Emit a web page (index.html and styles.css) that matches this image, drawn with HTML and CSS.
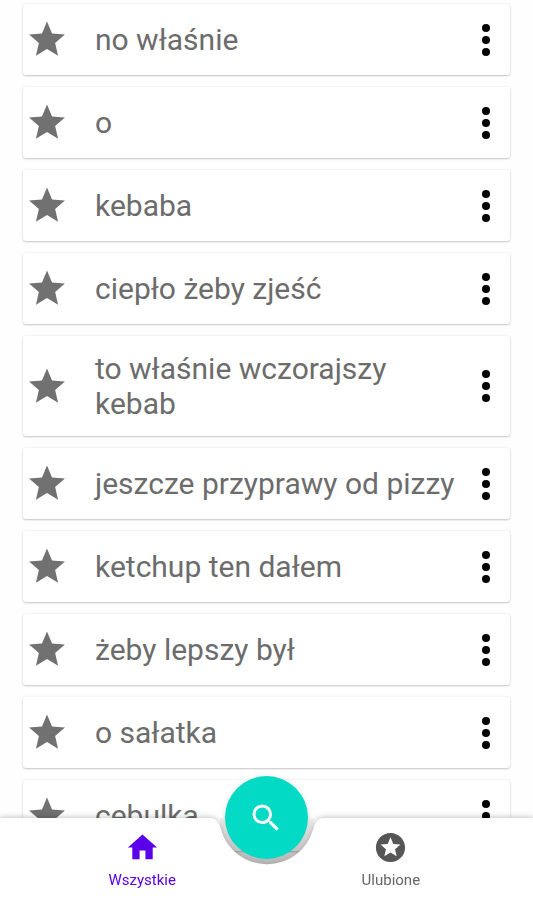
FILE: index.html
```
<!DOCTYPE html>
<html lang="pl">
<head>
    <meta charset="UTF-8">
    <meta name="viewport" content="width=device-width, initial-scale=1.0">
    <title>Wszystkie</title>
    <link rel="stylesheet" href="styles.css">
</head>
<body>
    <svg class="sprite" aria-hidden="true">
        <symbol id="star" viewBox="0 0 24 24"><path d="M12 17.27 18.18 21l-1.64-7.03L22 9.24l-7.19-.61L12 2 9.19 8.63 2 9.24l5.46 4.73L5.82 21z"/></symbol>
        <symbol id="more" viewBox="0 0 8 32"><circle cx="4" cy="4" r="4"/><circle cx="4" cy="16" r="4"/><circle cx="4" cy="28" r="4"/></symbol>
    </svg>
    <ul class="list">
        <li class="card">
            <button class="star" aria-label="Ulubione"><svg><use href="#star"/></svg></button>
            <span class="text">no właśnie</span>
            <button class="more" aria-label="Więcej"><svg><use href="#more"/></svg></button>
        </li>
        <li class="card">
            <button class="star" aria-label="Ulubione"><svg><use href="#star"/></svg></button>
            <span class="text">o</span>
            <button class="more" aria-label="Więcej"><svg><use href="#more"/></svg></button>
        </li>
        <li class="card">
            <button class="star" aria-label="Ulubione"><svg><use href="#star"/></svg></button>
            <span class="text">kebaba</span>
            <button class="more" aria-label="Więcej"><svg><use href="#more"/></svg></button>
        </li>
        <li class="card">
            <button class="star" aria-label="Ulubione"><svg><use href="#star"/></svg></button>
            <span class="text">ciepło żeby zjeść</span>
            <button class="more" aria-label="Więcej"><svg><use href="#more"/></svg></button>
        </li>
        <li class="card">
            <button class="star" aria-label="Ulubione"><svg><use href="#star"/></svg></button>
            <span class="text">to właśnie wczorajszy kebab</span>
            <button class="more" aria-label="Więcej"><svg><use href="#more"/></svg></button>
        </li>
        <li class="card">
            <button class="star" aria-label="Ulubione"><svg><use href="#star"/></svg></button>
            <span class="text">jeszcze przyprawy od pizzy</span>
            <button class="more" aria-label="Więcej"><svg><use href="#more"/></svg></button>
        </li>
        <li class="card">
            <button class="star" aria-label="Ulubione"><svg><use href="#star"/></svg></button>
            <span class="text">ketchup ten dałem</span>
            <button class="more" aria-label="Więcej"><svg><use href="#more"/></svg></button>
        </li>
        <li class="card">
            <button class="star" aria-label="Ulubione"><svg><use href="#star"/></svg></button>
            <span class="text">żeby lepszy był</span>
            <button class="more" aria-label="Więcej"><svg><use href="#more"/></svg></button>
        </li>
        <li class="card">
            <button class="star" aria-label="Ulubione"><svg><use href="#star"/></svg></button>
            <span class="text">o sałatka</span>
            <button class="more" aria-label="Więcej"><svg><use href="#more"/></svg></button>
        </li>
        <li class="card">
            <button class="star" aria-label="Ulubione"><svg><use href="#star"/></svg></button>
            <span class="text">cebulka</span>
            <button class="more" aria-label="Więcej"><svg><use href="#more"/></svg></button>
        </li>
    </ul>
    <nav class="bar">
        <!-- bar background with the cradle cut out in the middle -->
        <div class="bar-shape">
            <div class="bar-side"></div>
            <svg class="cradle" viewBox="0 0 120 82"><path d="M0 0H4Q11 0 14 12A48 48 0 0 0 106 12Q109 0 116 0H120V82H0Z"/></svg>
            <div class="bar-side"></div>
        </div>
        <div class="tabs">
            <a class="tab active" href="#all">
                <svg viewBox="0 0 24 24"><path d="M10 20v-6h4v6h5v-8h3L12 3 2 12h3v8z"/></svg>
                Wszystkie
            </a>
            <button class="fab" aria-label="Szukaj">
                <svg viewBox="0 0 24 24"><path d="M15.5 14h-.79l-.28-.27A6.47 6.47 0 0 0 16 9.5 6.5 6.5 0 1 0 9.5 16c1.61 0 3.09-.59 4.23-1.57l.27.28v.79l5 4.99L20.49 19zm-6 0C7.01 14 5 11.99 5 9.5S7.01 5 9.5 5 14 7.01 14 9.5 11.99 14 9.5 14z"/></svg>
            </button>
            <a class="tab" href="#favourites">
                <svg viewBox="0 0 24 24"><path d="M11.99 2C6.47 2 2 6.48 2 12s4.47 10 9.99 10C17.52 22 22 17.52 22 12S17.52 2 11.99 2zm4.24 16L12 15.45 7.77 18l1.12-4.81-3.73-3.23 4.92-.42L12 5l1.92 4.53 4.92.42-3.73 3.23z"/></svg>
                Ulubione
            </a>
        </div>
    </nav>
</body>
</html>
```
FILE: styles.css
```
* { box-sizing: border-box; }
body { margin: 0; height: 100vh; overflow: hidden; background: #fefefe; font-family: Roboto, sans-serif; color: #6c6c6c; }
button { border: 0; padding: 0; background: none; cursor: pointer; }
svg { display: block; }
.sprite { position: absolute; width: 0; height: 0; }

.list { list-style: none; margin: 0; padding: 4px 23px 90px; height: 100%; overflow-y: auto; scrollbar-width: none; display: flex; flex-direction: column; gap: 12px; }
.card { flex: none; display: flex; align-items: center; padding: 14px 20px 14px 2px; background: #fff; border-radius: 3px; box-shadow: 0 1px 2px rgba(0, 0, 0, .2), 0 0 3px rgba(0, 0, 0, .08); }
.star { flex: none; width: 44px; height: 43px; fill: #717171; }
.star svg { width: 44px; height: 43px; }
.text { flex: 1; padding: 1px 18px 1px 26px; font-size: 30px; line-height: 35px; }
.more { flex: none; width: 8px; height: 32px; fill: #000; }
.more svg { width: 8px; height: 32px; }

.bar { position: fixed; left: 0; right: 0; bottom: 0; height: 82px; display: grid; }
/* shade under the button, only visible through the cradle */
.bar::before { content: ""; grid-area: 1 / 1; justify-self: center; width: 94px; height: 48px; border-radius: 0 0 47px 47px; background: linear-gradient(rgba(0, 0, 0, .05), rgba(0, 0, 0, .2)); }
.bar-shape { grid-area: 1 / 1; display: flex; filter: drop-shadow(0 0 3px rgba(0, 0, 0, .3)); }
.bar-side { flex: 1; background: #fff; }
.cradle { width: 120px; height: 82px; fill: #fff; }
.tabs { grid-area: 1 / 1; position: relative; justify-self: center; width: 70%; display: grid; grid-template-columns: 1fr 1fr 1fr; }
.tab { display: flex; flex-direction: column; align-items: center; gap: 6px; padding-top: 12px; font-size: 15px; line-height: 18px; color: #666; fill: #565656; text-decoration: none; }
.tab svg { width: 35px; height: 35px; }
.active { color: #5b00ea; fill: #5b00ea; }
.fab { justify-self: center; display: grid; place-items: center; width: 83px; height: 83px; margin-top: -42px; border-radius: 50%; background: #03dac5; box-shadow: 0 2px 6px rgba(0, 0, 0, .15); fill: #fff; }
.fab svg { width: 36px; height: 36px; }
```
